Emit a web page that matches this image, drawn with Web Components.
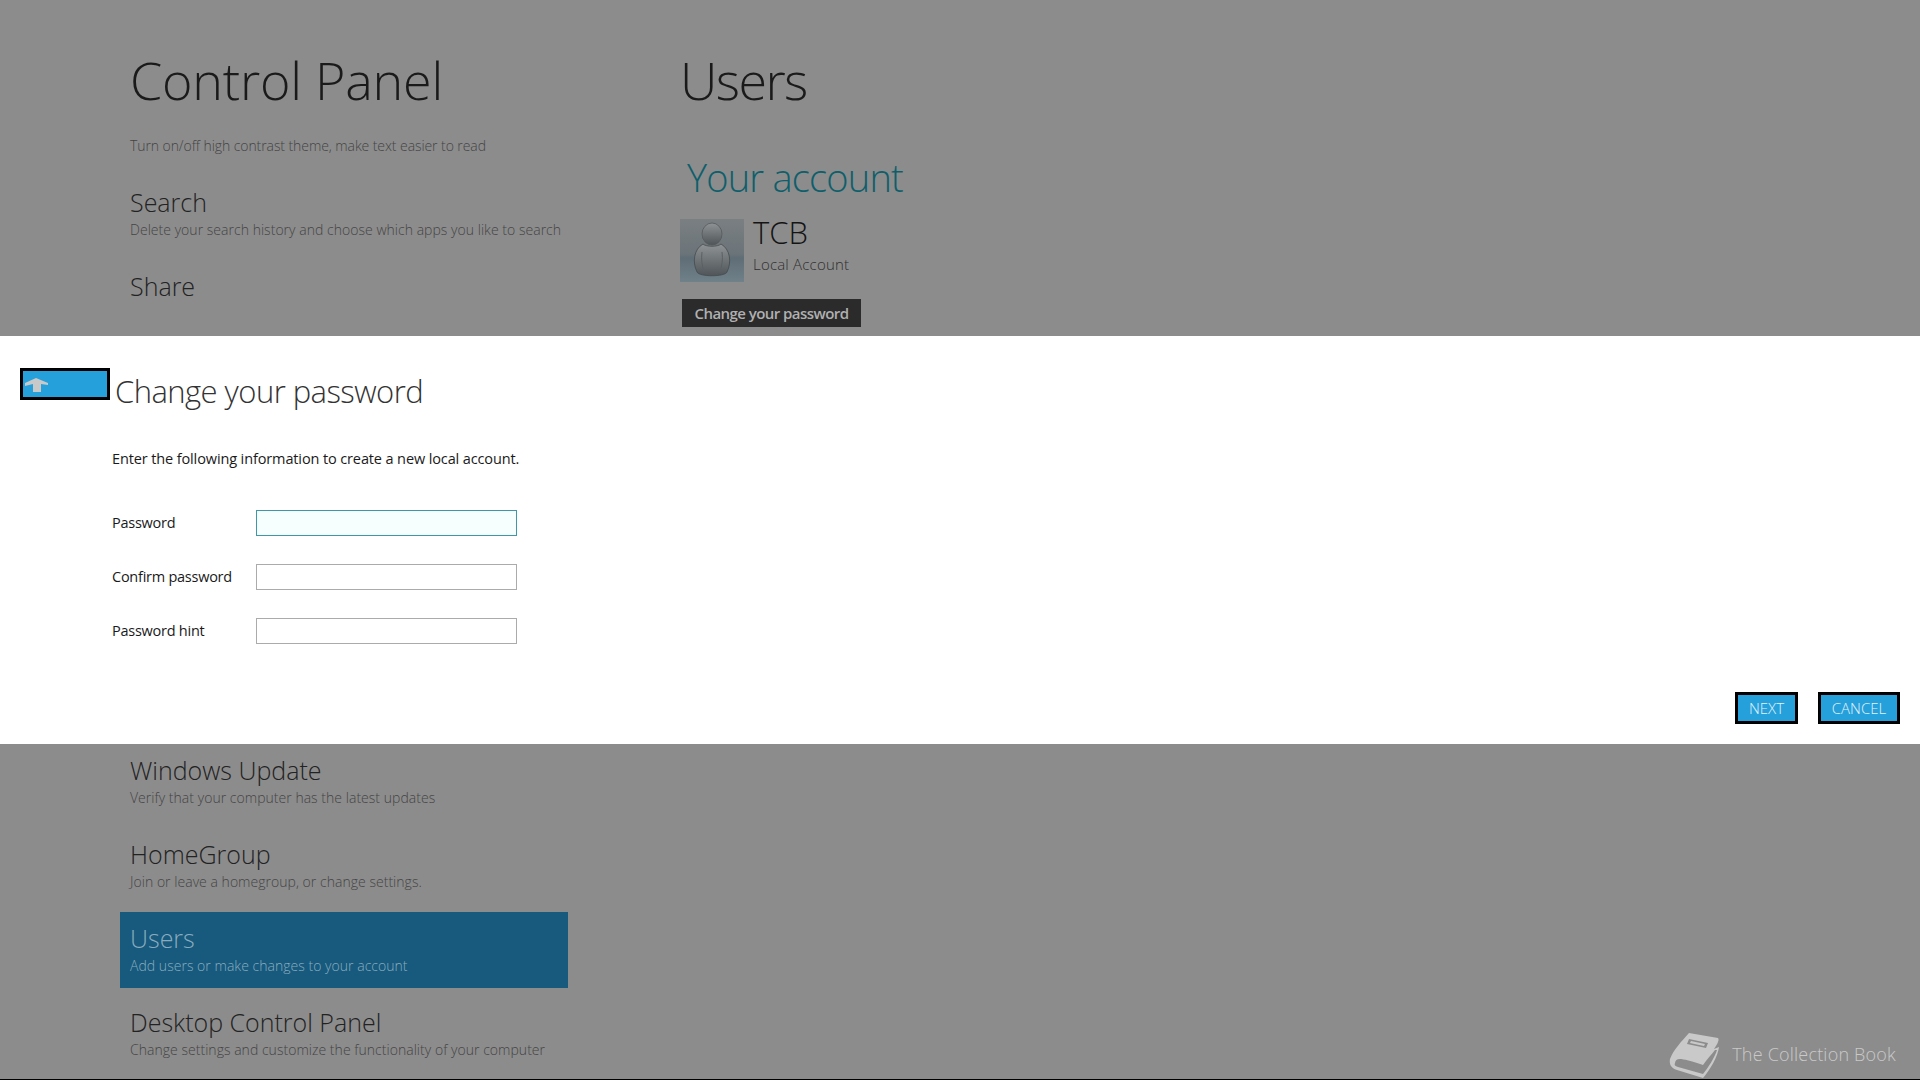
<!DOCTYPE html>
<html>
<head>
<meta charset="utf-8">
<title>Control Panel</title>
<style>
  html, body { margin: 0; padding: 0; height: 100%; overflow: hidden; background: #8c8c8c; }
  body { font-family: "Open Sans", "Noto Sans", "Liberation Sans", sans-serif; }
</style>
</head>
<body>
<cp-screen>
  <cp-band slot="top">
    <cp-column>
      <cp-heading>Control Panel</cp-heading>
      <cp-lead>Turn on/off high contrast theme, make text easier to read</cp-lead>
      <cp-list style="margin-top:20px">
        <cp-item name="Search">Delete your search history and choose which apps you like to search</cp-item>
        <cp-item name="Share"></cp-item>
      </cp-list>
    </cp-column>
    <cp-account></cp-account>
  </cp-band>
  <cp-dialog slot="dialog"></cp-dialog>
  <cp-band slot="bottom">
    <cp-column>
      <cp-list>
        <cp-item name="Windows Update">Verify that your computer has the latest updates</cp-item>
        <cp-item name="HomeGroup">Join or leave a homegroup, or change settings.</cp-item>
        <cp-item name="Users" selected>Add users or make changes to your account</cp-item>
        <cp-item name="Desktop Control Panel">Change settings and customize the functionality of your computer</cp-item>
      </cp-list>
    </cp-column>
    <cp-logo></cp-logo>
  </cp-band>
</cp-screen>
<script>
function define(name, html, setup) {
  const tpl = document.createElement('template');
  tpl.innerHTML = html;
  customElements.define(name, class extends HTMLElement {
    constructor() {
      super();
      this.attachShadow({ mode: 'open' });
      this.shadowRoot.appendChild(tpl.content.cloneNode(true));
    }
    connectedCallback() {
      if (setup) setup(this, this.shadowRoot);
    }
  });
}

define('cp-screen', `
  <style>
    :host { display: flex; flex-direction: column; width: 1920px; height: 1080px; box-sizing: border-box; border-bottom: 1px solid #000; background: #8c8c8c; }
    .top { height: 336px; overflow: hidden; display: block; }
    .dlg { height: 408px; display: block; }
    .bot { flex: 1; position: relative; display: block; overflow: hidden; }
  </style>
  <div class="top"><slot name="top"></slot></div>
  <div class="dlg"><slot name="dialog"></slot></div>
  <div class="bot"><slot name="bottom"></slot></div>
`);

define('cp-band', `
  <style>:host { display: flex; align-items: flex-start; }</style>
  <slot></slot>
`);

define('cp-column', `
  <style>:host { display: block; box-sizing: border-box; width: 680px; padding-left: 120px; }</style>
  <slot></slot>
`);

define('cp-heading', `
  <style>
    :host { display: block; margin-top: 48px; padding-left: 10px; font-size: 52px; line-height: 64px; font-weight: 300; color: #1a1a1a; letter-spacing: -0.22px; white-space: nowrap; }
  </style>
  <slot></slot>
`);

define('cp-lead', `
  <style>
    :host { display: block; margin-top: 24px; padding-left: 10px; font-size: 14px; line-height: 20px; font-weight: 300; color: #444; letter-spacing: -0.08px; white-space: nowrap; }
  </style>
  <slot></slot>
`);

define('cp-list', `
  <style>:host { display: flex; flex-direction: column; gap: 8px; width: 448px; }</style>
  <slot></slot>
`);

define('cp-item', `
  <style>
    :host { display: block; box-sizing: border-box; height: 76px; padding: 10px 0 0 10px; color: #222; white-space: nowrap; }
    :host([selected]) { background: #175a7d; color: #8aabbe; }
    .name { font-size: 25px; line-height: 32px; font-weight: 300; }
    .desc { margin-top: 2px; font-size: 14px; line-height: 20px; font-weight: 300; color: #444; letter-spacing: 0.03px; }
    :host([selected]) .desc { color: #8aabbe; }
  </style>
  <div class="name"></div>
  <div class="desc"><slot></slot></div>
`, (el, root) => { root.querySelector('.name').textContent = el.getAttribute('name'); });

define('cp-account', `
  <style>
    :host { display: block; }
    .head { margin-top: 48px; font-size: 52px; line-height: 64px; font-weight: 300; color: #1a1a1a; letter-spacing: -1.6px; }
    .section { margin: 41px 0 0 7px; font-size: 38px; line-height: 48px; font-weight: 300; color: #0e5f6b; letter-spacing: -0.8px; }
    .user { display: flex; gap: 9px; margin-top: 18px; }
    .user svg { display: block; width: 64px; height: 63px; }
    .who { font-size: 31px; line-height: 36px; color: #141414; font-weight: 300; margin-top: -5px; }
    .type { margin-top: 4px; font-size: 15px; line-height: 20px; color: #2f2f2f; font-weight: 300; white-space: nowrap; letter-spacing: 0.2px; }
    .btn { margin: 17px 0 0 2px; width: 179px; height: 28px; background: #2b2b2b; color: #b0b0b0; font-size: 15px; line-height: 28px; font-weight: 600; text-align: center; white-space: nowrap; letter-spacing: -0.55px; }
  </style>
  <div class="head">Users</div>
  <div class="section">Your account</div>
  <div class="user">
    <svg viewBox="0 0 64 63">
      <defs>
        <linearGradient id="bg" x1="0" y1="0" x2="0" y2="1">
          <stop offset="0" stop-color="#7a7f82"/><stop offset="0.55" stop-color="#6b7479"/><stop offset="0.62" stop-color="#5f6d76"/><stop offset="1" stop-color="#70818a"/>
        </linearGradient>
        <linearGradient id="fig" x1="0" y1="0" x2="0" y2="1">
          <stop offset="0" stop-color="#8f9396"/><stop offset="1" stop-color="#4f5558"/>
        </linearGradient>
      </defs>
      <rect width="64" height="63" fill="url(#bg)"/>
      <path d="M17 53 C12 43 14 30 23 25 C26 28 38 28 41 25 C50 30 52 43 47 53 C45 58 19 58 17 53 Z" fill="url(#fig)" stroke="#464b4e" stroke-width="0.8"/>
      <ellipse cx="32" cy="15" rx="10" ry="11" fill="url(#fig)" stroke="#55595c" stroke-width="0.8"/>
      <path d="M22 33 C21 40 22 47 24 53 M42 33 C43 40 42 47 40 53" fill="none" stroke="#5a6063" stroke-width="1"/>
    </svg>
    <div>
      <div class="who">TCB</div>
      <div class="type">Local Account</div>
    </div>
  </div>
  <div class="btn">Change your password</div>
`);

define('cp-button', `
  <style>
    :host { display: block; box-sizing: border-box; height: 32px; border: 3px solid #000; background: #26a0da; color: #e4f4fc; font-size: 15px; line-height: 26px; text-align: center; font-weight: 300; white-space: nowrap; }
  </style>
  <slot></slot>
`);

define('cp-field', `
  <style>
    :host { display: flex; align-items: center; height: 26px; }
    label { width: 144px; font-size: 14.5px; line-height: 20px; color: #1a1a1a; white-space: nowrap; letter-spacing: -0.25px; }
    .box { box-sizing: border-box; width: 261px; height: 26px; border: 1px solid #ababab; background: #fff; }
    :host([focused]) .box { border-color: #3f97a8; background: #f6fefe; }
  </style>
  <label><slot></slot></label><div class="box"></div>
`);

define('cp-dialog', `
  <style>
    :host { display: flex; flex-direction: column; box-sizing: border-box; height: 408px; background: #fff; padding: 32px 20px 0; color: #1a1a1a; }
    .head { display: flex; gap: 5px; }
    .back { display: block; box-sizing: border-box; width: 90px; height: 32px; border: 3px solid #000; background: #26a0da; }
    .back svg { display: block; margin: 3px 0 0 0; }
    .title { margin-top: -1px; height: 48px; font-size: 31px; line-height: 48px; font-weight: 300; color: #333; white-space: nowrap; letter-spacing: -0.55px; }
    .body { margin-left: 92px; }
    p { margin: 34px 0 0; font-size: 14.5px; line-height: 20px; white-space: nowrap; letter-spacing: -0.12px; }
    .fields { display: flex; flex-direction: column; gap: 28px; margin-top: 41px; }
    .actions { display: flex; justify-content: flex-end; gap: 20px; margin-top: 48px; }
    .next { width: 63px; }
    .cancel { width: 82px; }
  </style>
  <div class="head">
    <div class="back">
      <svg width="28" height="20" viewBox="0 0 28 20"><path d="M2 9 L13 4 L25 9 L25 11 L18 10 L18 18 L10 18 L10 10 L2 12 Z" fill="#c9c9c9"/></svg>
    </div>
    <div class="title">Change your password</div>
  </div>
  <div class="body">
    <p>Enter the following information to create a new local account.</p>
    <div class="fields">
      <cp-field focused>Password</cp-field>
      <cp-field>Confirm password</cp-field>
      <cp-field>Password hint</cp-field>
    </div>
  </div>
  <div class="actions">
    <cp-button class="next">NEXT</cp-button>
    <cp-button class="cancel">CANCEL</cp-button>
  </div>
`);

define('cp-logo', `
  <style>
    :host { position: absolute; right: 24px; bottom: 0; display: flex; align-items: center; gap: 11px; height: 47px; color: #c9c9c9; font-size: 18px; font-weight: 300; white-space: nowrap; letter-spacing: 0.2px; }
    svg { display: block; width: 52px; height: 47px; }
    span { margin-top: -3px; }
  </style>
  <svg viewBox="0 0 52 47">
    <path d="M20 1 L49 6 C51 8 47 14 45 17 L50 15 C49 24 41 38 34 46 L8 38 C2 36 0 32 1 27 C4 18 13 9 20 1 Z" fill="#c9c9c9"/>
    <path d="M6 31 C7 25 12 26 34 33 C38 27 43 22 46 18 L48 18 C46 25 39 36 34 42 L9 35 C6 34 5 33 6 31 Z" fill="#8c8c8c"/>
    <path d="M20 7 L39 11 L37 16 L18 12 Z" fill="#8c8c8c"/>
    <path d="M22 9 L36 12 L35 14 L21 11 Z" fill="#c9c9c9"/>
  </svg>
  <span>The Collection Book</span>
`);
</script>
</body>
</html>
